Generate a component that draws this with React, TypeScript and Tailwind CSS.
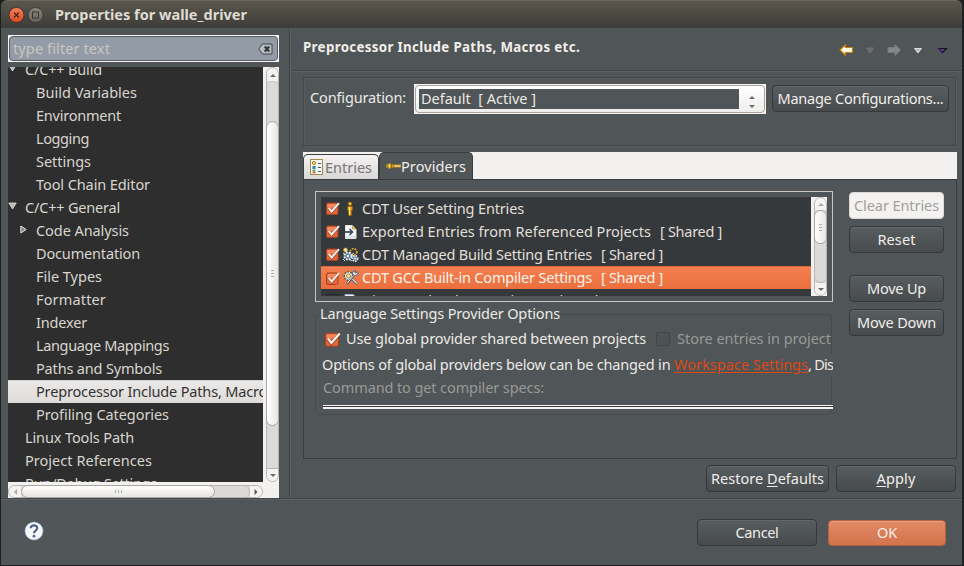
import { useLayoutEffect, useRef, useState } from "react";
import type { ReactNode } from "react";

/* Text run whose tracking is adjusted so that it spans `w` pixels. */
function Fit({ w, className = "", children }: { w: number; className?: string; children: ReactNode }) {
  const ref = useRef<HTMLSpanElement>(null);
  const [track, setTrack] = useState(0);
  useLayoutEffect(() => {
    const el = ref.current;
    if (!el) return;
    const count = (el.textContent || "").length;
    setTrack((w - el.getBoundingClientRect().width) / count);
  }, [w]);
  return (
    <span ref={ref} className={`inline-block shrink-0 pb-0.5 whitespace-pre ${className}`} style={{ letterSpacing: `${track}px` }}>
      {children}
    </span>
  );
}

type Node = { label: string; w: number; level: 1 | 2; arrow?: "down" | "right"; selected?: boolean };

const tree: Node[] = [
  { label: "C/C++ Build", w: 77, level: 1, arrow: "down" },
  { label: "Build Variables", w: 101, level: 2 },
  { label: "Environment", w: 85, level: 2 },
  { label: "Logging", w: 53, level: 2 },
  { label: "Settings", w: 55, level: 2 },
  { label: "Tool Chain Editor", w: 114, level: 2 },
  { label: "C/C++ General", w: 95, level: 1, arrow: "down" },
  { label: "Code Analysis", w: 93, level: 2, arrow: "right" },
  { label: "Documentation", w: 104, level: 2 },
  { label: "File Types", w: 66, level: 2 },
  { label: "Formatter", w: 70, level: 2 },
  { label: "Indexer", w: 51, level: 2 },
  { label: "Language Mappings", w: 133, level: 2 },
  { label: "Paths and Symbols", w: 126, level: 2 },
  { label: "Preprocessor Include Paths, Macros", w: 238, level: 2, selected: true },
  { label: "Profiling Categories", w: 133, level: 2 },
  { label: "Linux Tools Path", w: 109, level: 1 },
  { label: "Project References", w: 127, level: 1 },
  { label: "Run/Debug Settings", w: 132, level: 1 },
];

function TreeRow({ node }: { node: Node }) {
  return (
    <div
      className={`flex h-[23px] shrink-0 items-center ${
        node.selected
          ? "border-t border-[#d5d3d0] bg-linear-to-b from-[#ebe9e8] to-[#dedbd8] text-[#333333]"
          : "text-[#d8d5cf]"
      }`}
    >
      <div className={`flex shrink-0 ${node.level === 1 ? "w-[17px]" : "w-7 pl-3"}`}>
        {node.arrow === "down" && (
          <svg width="9" height="8" viewBox="0 0 9 8" className="mb-1">
            <path d="M.8 1h7.400L4.500 7z" fill="#b9b8b6" stroke="#e0dfdc" strokeWidth=".8" />
          </svg>
        )}
        {node.arrow === "right" && (
          <svg width="8" height="9" viewBox="0 0 8 9" className="mb-0.5">
            <path d="M.8 1v7L6.200 4.500z" fill="#8c8b89" stroke="#e0dfdc" strokeWidth="1" />
          </svg>
        )}
      </div>
      <Fit w={node.w}>{node.label}</Fit>
    </div>
  );
}

function Chevron({ dir, color = "#6b6b6b" }: { dir: "up" | "down" | "left" | "right"; color?: string }) {
  const d = {
    up: "M0 5 3 2l3 3z",
    down: "M0 2h6L3 5z",
    left: "M5 0v6L2 3z",
    right: "M1.500 0v6l3-3z",
  }[dir];
  return (
    <svg width="6" height="6" viewBox="0 0 6 6">
      <path d={d} fill={color} />
    </svg>
  );
}

function Button({ className = "", children }: { className?: string; children: ReactNode }) {
  return (
    <button
      className={`flex h-[27px] shrink-0 items-center justify-center rounded-[4px] border border-[#36393b] bg-linear-to-b from-[#585d5f] to-[#474b4d] text-[#f0eeea] shadow-[inset_0_1px_0_#62676a] ${className}`}
    >
      {children}
    </button>
  );
}

function Check({ size = 13 }: { size?: number }) {
  return (
    <svg width={size + 2} height={size} viewBox="0 0 15 13" className="shrink-0">
      <rect x=".5" y="1" width="11.500" height="11.500" rx="1.500" fill="#e4673a" stroke="#a9411f" />
      <path d="M1.500 2h9.500v3.500h-9.500z" fill="#f58a61" />
      <path d="M2.700 6.300 5.600 10 12.500 2" fill="none" stroke="#6a3d2d" strokeWidth="3" opacity=".55" />
      <path d="M2.700 5.800 5.600 9.500 13 1.200" fill="none" stroke="#f5f2ee" strokeWidth="1.900" />
    </svg>
  );
}

function PersonIcon() {
  return (
    <svg width="16" height="16" viewBox="0 0 16 16">
      <circle cx="7" cy="2.800" r="1.700" fill="#f3cd45" stroke="#a0660e" strokeWidth=".8" />
      <path d="M4.700 5.500h4.600v4h-1V14.500H5.700V9.500h-1z" fill="#e8a81c" stroke="#a0660e" strokeWidth=".8" />
      <path d="M6.500 6v8" stroke="#ffe983" />
    </svg>
  );
}

function ExportIcon() {
  return (
    <svg width="16" height="16" viewBox="0 0 16 16">
      <path d="M2.500 1.500h7L13 5v9.500H2.500z" fill="#f5f8fc" stroke="#e6e2d4" />
      <path d="M9.500 1.500V5H13z" fill="#e7cd83" stroke="#b49441" strokeWidth=".7" />
      <path d="M3 11.500h9.500v2.500H3z" fill="#d5e3f0" />
      <path d="M2 8h7" stroke="#3c4b5b" strokeWidth="1.800" />
      <path d="m6.500 5 3 3-3 3" fill="none" stroke="#3c4b5b" strokeWidth="1.600" />
    </svg>
  );
}

function ManagedIcon() {
  return (
    <svg width="16" height="16" viewBox="0 0 16 16">
      <circle cx="2.500" cy="3" r="2" fill="#f7e6a0" stroke="#c69b2f" strokeWidth=".7" />
      <circle cx="10.500" cy="5" r="3.300" fill="none" stroke="#e2a72e" strokeWidth="1.700" strokeDasharray="1.700 1" />
      <circle cx="5" cy="9" r="3.600" fill="#607d9b" stroke="#e9f1f8" strokeWidth="2" strokeDasharray="1.800 1.100" />
      <circle cx="12" cy="11.500" r="2.600" fill="#526f8e" stroke="#dfe9f2" strokeWidth="1.800" strokeDasharray="1.500 1" />
      <circle cx="5" cy="9" r="1.200" fill="#f5f8fa" />
      <circle cx="12" cy="11.500" r="1" fill="#f5f8fa" />
      <path d="M0 6 3 8M6 12l3 2M8 8l3-2M0 12l2 2" stroke="#c9d9e8" />
    </svg>
  );
}

function CompilerIcon() {
  return (
    <svg width="16" height="16" viewBox="0 0 16 16">
      <circle cx="5.500" cy="6" r="4.200" fill="#e9ece2" stroke="#5c5a45" strokeWidth="1.500" strokeDasharray="2 1" />
      <circle cx="5.500" cy="6" r="2" fill="#f8e7ae" stroke="#ad873a" />
      <path d="m9 9 5 5" stroke="#6d625a" strokeWidth="2.600" />
      <path d="m9 8.700 5 5" stroke="#dfe5e6" strokeWidth="1.200" />
      <path d="m4 14 6.500-8" stroke="#44576b" strokeWidth="2" />
      <path d="m4 13.500 6.500-8" stroke="#e7eef4" />
      <path d="M14.800 1.500 12.800 3.200l-1.300-1L13 .5 10 1.500 9.500 4l2 1.500 3.300-1z" fill="#eef4fa" stroke="#345174" strokeWidth=".8" />
    </svg>
  );
}

function LogIcon() {
  return (
    <svg width="16" height="16" viewBox="0 0 16 16">
      <path d="M2 1.500h8l3 3v10H2z" fill="#e6effb" stroke="#9eafc9" />
      <path d="M10 1.500v3h3z" fill="#e4d69c" />
      <path d="M4 5h6M4 8h7" stroke="#5f7da5" />
    </svg>
  );
}

const providers = [
  { name: "CDT User Setting Entries", w: 162, icon: <PersonIcon /> },
  { name: "Exported Entries from Referenced Projects", w: 289, shared: true, icon: <ExportIcon /> },
  { name: "CDT Managed Build Setting Entries", w: 230, shared: true, icon: <ManagedIcon /> },
  { name: "CDT GCC Built-in Compiler Settings", w: 230, shared: true, selected: true, icon: <CompilerIcon /> },
  { name: "Discovered Paths Container", w: 173, shared: true, unchecked: true, icon: <LogIcon /> },
];

function TitleBar() {
  return (
    <div className="flex h-7 shrink-0 items-center rounded-t-[6px] border-t border-[#6b675d] bg-linear-to-b from-[#5b574e] to-[#3d3c37] pl-2">
      <svg width="36" height="18" viewBox="0 0 36 18">
        <defs>
          <linearGradient id="close" x1="0" y1="0" x2="0" y2="1">
            <stop offset="0" stopColor="#f98260" />
            <stop offset="1" stopColor="#dc481c" />
          </linearGradient>
          <linearGradient id="max" x1="0" y1="0" x2="0" y2="1">
            <stop offset="0" stopColor="#8a867d" />
            <stop offset="1" stopColor="#66635b" />
          </linearGradient>
        </defs>
        <circle cx="7.500" cy="9" r="7.500" fill="url(#close)" stroke="#3a2a22" strokeWidth=".8" />
        <path d="m5 6.500 5 5m0-5-5 5" stroke="#42261b" strokeWidth="1.300" />
        <circle cx="26.500" cy="9" r="7.500" fill="url(#max)" stroke="#34332f" strokeWidth=".8" />
        <rect x="23.500" y="6" width="6" height="6" fill="none" stroke="#37362f" />
      </svg>
      <Fit w={192} className="ml-2.5 font-bold text-[#dfdbd2]">Properties for walle_driver</Fit>
    </div>
  );
}

function Sidebar() {
  return (
    <div className="flex w-[288px] shrink-0 flex-col pt-[7px] pl-[7px]">
      <div className="h-[27px] w-[271px] shrink-0 bg-[#f7f6f5] p-px">
        <div className="flex h-full items-center justify-between rounded-[4px] border border-[#565d66] bg-[#929ba6] pr-1 pl-[3px] text-[#cac6c0]">
          <Fit w={97}>type filter text</Fit>
          <svg width="15" height="12" viewBox="0 0 15 12">
            <path d="M4.500 1h9.500v10H4.500L.8 6z" fill="#b7bdc3" stroke="#41464b" />
            <path d="m6.800 3.500 4.400 5m0-5-4.400 5" stroke="#34393d" strokeWidth="2.200" />
          </svg>
        </div>
      </div>
      <div className="mt-[5px] flex h-[415px] w-[271px] shrink-0">
        <div className="w-[255px] overflow-hidden bg-[#2e2e2e]">
          <div className="-mt-[9px] flex flex-col">
            {tree.map((n) => (
              <TreeRow key={n.label} node={n} />
            ))}
          </div>
        </div>
        <div className="flex w-4 justify-center bg-[#f2f1f0] pl-[3px]">
          <div className="flex w-[13px] flex-col items-center rounded-full border border-[#b8b4b0] bg-[#dcdad8]">
            <div className="flex h-[13px] w-full shrink-0 items-center justify-center rounded-t-full bg-[#f4f3f2]"><Chevron dir="up" /></div>
            <div className="h-10 w-full shrink-0 rounded-t-full border-t border-[#c4c1bd]" />
            <div className="flex h-[305px] w-[13px] shrink-0 flex-col items-center justify-center gap-0.5 rounded-full border border-[#aaa6a2] bg-linear-to-r from-white to-[#e8e6e4]">
              <i className="h-px w-[3px] bg-[#aaa]" /><i className="h-px w-[3px] bg-[#aaa]" /><i className="h-px w-[3px] bg-[#aaa]" />
            </div>
            <div className="grow" />
            <div className="flex h-[13px] w-full shrink-0 items-center justify-center rounded-b-full border-t border-[#b8b4b0] bg-[#f4f3f2]"><Chevron dir="down" /></div>
          </div>
        </div>
      </div>
      <div className="flex h-4 w-[271px] shrink-0 bg-[#f2f1f0] pt-[3px]">
        <div className="flex h-[13px] w-[255px] items-center rounded-full border border-[#b8b4b0] bg-[#dcdad8]">
          <div className="flex h-full w-3 shrink-0 items-center justify-center rounded-l-full bg-[#f4f3f2]"><Chevron dir="left" color="#aaa" /></div>
          <div className="flex h-[13px] w-[194px] shrink-0 items-center justify-center gap-0.5 rounded-full border border-[#aaa6a2] bg-linear-to-b from-white to-[#e8e6e4]">
            <i className="h-[3px] w-px bg-[#aaa]" /><i className="h-[3px] w-px bg-[#aaa]" /><i className="h-[3px] w-px bg-[#aaa]" />
          </div>
          <div className="h-full grow rounded-r-full border-r border-[#b8b4b0]" />
          <div className="flex h-full w-3 shrink-0 items-center justify-center rounded-r-full bg-[#f4f3f2]"><Chevron dir="right" color="#555" /></div>
        </div>
      </div>
    </div>
  );
}

function Header() {
  return (
    <div className="flex h-[44px] shrink-0 items-start justify-between border-b border-[#5c6163] pr-[13px] pl-3 shadow-[inset_0_-1px_0_#424648]">
      <Fit w={277} className="mt-[9px] text-[13.3px] font-bold text-[#f0eeea]">Preprocessor Include Paths, Macros etc.</Fit>
      <svg width="110" height="14" viewBox="0 0 110 14" className="mt-[15px]">
        <path d="M1 7 6.500 1.800V4.500H13.500v5H6.500v2.700z" fill="#fffbe0" stroke="#c4810f" strokeWidth="1.200" />
        <path d="M27.500 5h7l-3.500 5z" fill="#6a6d6e" stroke="#75706f" />
        <path d="M61.500 7 56 1.500V4.500h-7v5h7v3z" fill="#84888a" stroke="#777b7d" />
        <path d="M75.500 5.500h7L79 10z" fill="#bcbcba" stroke="#deddda" />
        <path d="M100 5.500h7.500l-4 4z" fill="#505456" stroke="#180d28" strokeWidth="1.200" />
        <path d="m100 5.500 3.700 4" stroke="#4a1694" strokeWidth="1.200" />
      </svg>
    </div>
  );
}

function ConfigBox() {
  return (
    <div className="mt-[5px] ml-3 flex h-[69px] w-[653px] shrink-0 items-start border border-[#43474a] pt-1.5 pl-1.5 text-[#eceae6] shadow-[inset_1px_1px_0_#575c5e,1px_1px_0_#575c5e]">
      <Fit w={96} className="mt-[3px]">Configuration:</Fit>
      <div className="ml-2 h-[30px] w-[352px] shrink-0 bg-[#f6f5f4] p-px">
        <div className="flex h-full items-center rounded-[4px] border border-[#a9a09a] bg-linear-to-b from-white to-[#f0eeec] pl-[3px]">
          <div className="flex h-5 w-80 items-center bg-[#505557] pl-0.5">
            <Fit w={115}>Default  [ Active ]</Fit>
          </div>
          <div className="ml-2.5 flex flex-col gap-[3px] pt-1"><Chevron dir="up" /><Chevron dir="down" /></div>
        </div>
      </div>
      <Button className="mt-px ml-1.5 w-[177px]"><Fit w={166}>Manage Configurations...</Fit></Button>
    </div>
  );
}

function Tabs() {
  return (
    <div className="flex h-[27px] w-[654px] shrink-0 items-end bg-[#f2f1ef]">
      <div className="flex h-[25px] w-[76px] items-center rounded-t-[5px] border border-b-0 border-[#3b3e40] bg-linear-to-b from-[#f5f4f3] to-[#d9d7d5] pl-1.5 text-[#77767a]">
        <svg width="13" height="16" viewBox="0 0 13 16" className="mr-0.5 shrink-0">
          <rect x=".5" y=".5" width="12" height="15" fill="#f6f7f0" stroke="#a58b4b" />
          <circle cx="4" cy="4" r="1.600" fill="#ffe282" stroke="#aa7d1f" />
          <path d="M2.500 7.500h3m-3 2h3m-3-1h3" stroke="#347db0" strokeWidth="1.200" />
          <path d="M2.500 11.500h3" stroke="#409469" strokeWidth="1.500" />
          <path d="M2.500 13.500h3" stroke="#d3532a" strokeWidth="1.500" />
          <path d="M8 4.500h3M8 8.500h3M8 12.500h3" stroke="#2a5e91" />
        </svg>
        <Fit w={47} className="pt-0.5">Entries</Fit>
      </div>
      <div className="flex h-[27px] w-[94px] items-center rounded-t-[5px] border border-b-0 border-[#3b3e40] bg-[#505557] pl-1.5 text-[#f0eeea]">
        <svg width="15" height="8" viewBox="0 0 15 8" className="shrink-0">
          <path d="M0 4h2M8 4h7" stroke="#c89010" strokeWidth="2.800" />
          <path d="M7 4h7.500" stroke="#ffeeb0" />
          <path d="M2 1.800h3v4.400H2zM6 2.500h1.500v3H6z" fill="#f7d65b" stroke="#a66e05" strokeWidth=".8" />
        </svg>
        <Fit w={65} className="pt-0.5">Providers</Fit>
      </div>
    </div>
  );
}

function ProviderList() {
  return (
    <div className="flex h-[111px] w-[518px] shrink-0 border border-[#c9c5c0] p-[5px]">
      <div className="w-[490px] overflow-hidden bg-[#35393b]">
        {providers.map((p) => (
          <div
            key={p.name}
            className={`flex h-[23px] items-center pl-[5px] ${p.selected ? "border-t border-[#d9653a] bg-linear-to-b from-[#f47f50] to-[#ea6f3d] text-[#fbf3ea]" : "text-[#e2dfda]"}`}
          >
            {p.unchecked ? <div className="h-[13px] w-[15px] rounded-xs border border-[#25282a] bg-[#303335]" /> : <Check />}
            <div className="mr-[3px] ml-0.5 w-4 shrink-0">{p.icon}</div>
            <Fit w={p.w}>{p.name}</Fit>
            {p.shared && <Fit w={62} className="ml-[9px]">[ Shared ]</Fit>}
          </div>
        ))}
      </div>
      <div className="flex w-4 bg-[#f2f1f0] pl-[3px]">
        <div className="flex w-[13px] flex-col items-center rounded-full border border-[#b8b4b0] bg-[#dcdad8]">
          <div className="flex h-3 w-full shrink-0 items-center justify-center rounded-t-full bg-[#f4f3f2]"><Chevron dir="up" color="#aaa" /></div>
          <div className="flex h-[34px] w-[13px] shrink-0 flex-col items-center justify-center gap-0.5 rounded-[6px] border border-[#aaa6a2] bg-linear-to-r from-white to-[#e8e6e4]">
            <i className="h-px w-[3px] bg-[#aaa]" /><i className="h-px w-[3px] bg-[#aaa]" /><i className="h-px w-[3px] bg-[#aaa]" />
          </div>
          <div className="w-full grow rounded-b-full border-b border-[#b8b4b0]" />
          <div className="flex h-3 w-full shrink-0 items-center justify-center rounded-b-full bg-[#f4f3f2]"><Chevron dir="down" /></div>
        </div>
      </div>
    </div>
  );
}

function ProviderOptions() {
  return (
    <div className="h-[113px] w-[518px] shrink-0 overflow-hidden pt-3 text-[#eceae6]">
      <div className="h-[101px] w-[517px] rounded-[4px] border border-[#474b4e]">
        <div className="-mt-[13px] flex h-6 items-center">
          <Fit w={240} className="ml-1 bg-[#505557]">Language Settings Provider Options</Fit>
        </div>
        <div className="mt-px flex h-6 items-center pl-[9px]">
          <Check size={15} />
          <Fit w={300} className="ml-1">Use global provider shared between projects</Fit>
          <div className="ml-2.5 h-3.5 w-3.5 rounded-xs border border-[#434749] bg-[#4d5254]" />
          <Fit w={154} className="ml-[7px] bg-[#505557] text-[#989a98]">Store entries in project</Fit>
        </div>
        <div className="mt-0.5 flex h-6 w-[517px] items-center overflow-hidden pl-1.5">
          <Fit w={352}>Options of global providers below can be changed in </Fit>
          <Fit w={134} className="text-[#dd4814] underline underline-offset-2">Workspace Settings</Fit>
          <Fit w={65} className="bg-[#505557]">, Discovery</Fit>
        </div>
        <div className="-mt-px flex h-6 items-center pl-[7px] text-[#989a98]">
          <Fit w={221}>Command to get compiler specs:</Fit>
        </div>
        <div className="mt-[5px] ml-[7px] h-1 w-[511px] border-t border-b-2 border-[#f4f3f2] bg-[#35393b]" />
      </div>
    </div>
  );
}

export default function App() {
  return (
    <div
      className="h-[566px] w-[964px] overflow-hidden bg-[#1e1f20] pl-px text-[14.5px] leading-5"
      style={{ fontFamily: '"Noto Sans", "Open Sans", sans-serif' }}
    >
      <div className="flex h-[565px] w-[961px] flex-col">
        <TitleBar />
        <div className="flex h-[470px] shrink-0 bg-[#505557]">
          <Sidebar />
          <div className="h-full w-0.5 shrink-0 border-r border-l border-r-[#5c6163] border-l-[#424648]" />
          <div className="flex w-[671px] shrink-0 flex-col">
            <Header />
            <ConfigBox />
            <div className="mt-[6px] ml-3">
              <Tabs />
              <div className="flex h-[280px] w-[654px] border border-[#3b3e40] pl-[11px]">
                <div className="flex flex-col pt-[11px]">
                  <ProviderList />
                  <ProviderOptions />
                </div>
                <div className="ml-4 flex flex-col pt-3">
                  <button className="flex h-[27px] w-[95px] items-center justify-center rounded-[4px] border border-[#dcdad8] bg-[#f3f2f1] text-[#a3a19e]"><Fit w={85}>Clear Entries</Fit></button>
                  <Button className="mt-[7px] w-[95px]"><Fit w={38}>Reset</Fit></Button>
                  <Button className="mt-[22px] w-[95px]"><Fit w={59}>Move Up</Fit></Button>
                  <Button className="mt-[7px] w-[95px]"><Fit w={79}>Move Down</Fit></Button>
                </div>
              </div>
            </div>
            <div className="mt-1.5 flex justify-end gap-[7px] pr-[6px]">
              <Button className="w-[123px]"><Fit w={113}>Restore <u className="underline-offset-2">D</u>efaults</Fit></Button>
              <Button className="w-[120px]"><Fit w={39}><u className="underline-offset-2">A</u>pply</Fit></Button>
            </div>
          </div>
        </div>
        <div className="flex h-[67px] shrink-0 items-start border-t border-[#424648] bg-[#505557] pt-5 pr-[16px] pl-[23px] shadow-[inset_0_1px_0_#5c6163]">
          <svg width="20" height="20" viewBox="0 0 20 20" className="mt-0.5">
            <circle cx="10" cy="10" r="9.300" fill="#f6f7f9" stroke="#566d92" strokeWidth=".8" />
            <path d="M6.700 7.300C6.900 3.300 13.400 3.500 13.200 7.200 13.100 9.500 10 9.700 10 12.300" fill="none" stroke="#4d648f" strokeWidth="2.200" />
            <circle cx="10" cy="15.200" r="1.400" fill="#4d648f" />
          </svg>
          <div className="grow" />
          <Button className="w-[120px]"><Fit w={43}>Cancel</Fit></Button>
          <button className="mt-px ml-[11px] flex h-[26px] w-[118px] items-center justify-center rounded-[4px] border border-[#b5623f] bg-linear-to-b from-[#e28a66] to-[#d2734c] text-[#f4eee8] shadow-[inset_0_1px_0_#eda080]"><Fit w={20}>OK</Fit></button>
        </div>
      </div>
    </div>
  );
}
